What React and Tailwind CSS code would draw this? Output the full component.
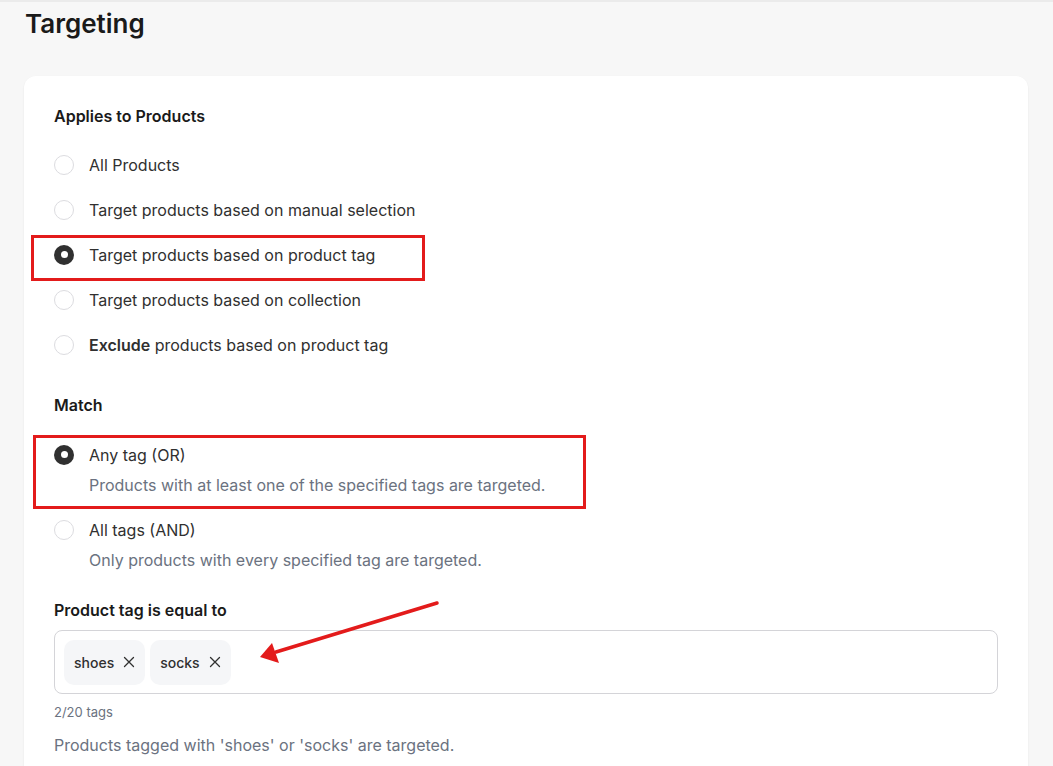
import React from 'react';

const font = { fontFamily: 'Inter, "Noto Sans", sans-serif' };

function Radio({ checked }) {
  return checked ? (
    <span className="w-5 h-5 shrink-0 rounded-full bg-[#303030] flex items-center justify-center">
      <span className="w-[7px] h-[7px] rounded-full bg-white" />
    </span>
  ) : (
    <span className="w-5 h-5 shrink-0 rounded-full border border-[#dcdce0] bg-white" />
  );
}

function Option({ checked, children, help }) {
  return (
    <div className="flex flex-col">
      <div className="flex items-center gap-[15px] h-[25px]">
        <Radio checked={checked} />
        <span className="text-[16px] text-[#303030]">{children}</span>
      </div>
      {help && <p className="pl-[35px] mt-[8px] text-[16px] text-[#6b7280] leading-[20px]">{help}</p>}
    </div>
  );
}

function Tag({ label }) {
  return (
    <span className="h-[45px] px-[10px] rounded-[10px] bg-[#f5f6f8] flex items-center gap-[9px] text-[14px] font-medium text-[#303030]">
      {label}
      <svg width="12" height="12" viewBox="0 0 12 12" stroke="#303030" strokeWidth="1.3" strokeLinecap="round">
        <path d="M1.5 1.5l9 9M10.5 1.5l-9 9" />
      </svg>
    </span>
  );
}

export default function App() {
  return (
    <div className="min-h-[766px] bg-[#f7f7f7] border-t-2 border-[#ebebeb] relative overflow-hidden" style={font}>
      <h1 className="pl-[25px] pt-[3px] text-[26px] font-semibold text-[#1a1a1a] leading-[38px]">Targeting</h1>

      <div className="mt-[33px] ml-[24px] w-[1004px] bg-white rounded-[12px] shadow-[0_1px_2px_rgba(0,0,0,0.08)] px-[30px] pt-[28px] pb-[40px]">
        <h2 className="text-[16px] font-semibold text-[#1a1a1a] leading-[24px]">Applies to Products</h2>
        <div className="mt-[24px] flex flex-col gap-[20px]">
          <Option>All Products</Option>
          <Option>Target products based on manual selection</Option>
          <Option checked>Target products based on product tag</Option>
          <Option>Target products based on collection</Option>
          <Option>
            <b className="font-semibold">Exclude</b> products based on product tag
          </Option>
        </div>

        <h2 className="mt-[36px] text-[16px] font-semibold text-[#1a1a1a] leading-[24px]">Match</h2>
        <div className="mt-[25px] flex flex-col gap-[22px]">
          <Option checked help="Products with at least one of the specified tags are targeted.">Any tag (OR)</Option>
          <Option help="Only products with every specified tag are targeted.">All tags (AND)</Option>
        </div>

        <h2 className="mt-[28px] text-[16px] font-semibold text-[#1a1a1a] leading-[24px]">Product tag is equal to</h2>
        <div className="mt-[8px] w-[944px] h-[64px] rounded-[8px] border border-[#d4d4d8] flex items-center gap-[5px] px-[9px]">
          <Tag label="shoes" />
          <Tag label="socks" />
        </div>
        <p className="mt-[9px] text-[13px] text-[#6b7280] leading-[18px]">2/20 tags</p>
        <p className="mt-[14px] text-[16px] text-[#6b7280] leading-[20px]">Products tagged with 'shoes' or 'socks' are targeted.</p>
      </div>

      {/* annotations */}
      <div className="absolute left-[31px] top-[233px] w-[394px] h-[46px] border-[3px] border-[#e31b1b]" />
      <div className="absolute left-[33px] top-[433px] w-[553px] h-[74px] border-[3px] border-[#e31b1b]" />
      <svg className="absolute left-0 top-0" width="1053" height="766" style={{ pointerEvents: 'none' }}>
        <line x1="437" y1="601" x2="276" y2="650" stroke="#e31b1b" strokeWidth="3.5" strokeLinecap="round" />
        <polygon points="260,655 272,641 279,661" fill="#e31b1b" />
      </svg>
    </div>
  );
}
